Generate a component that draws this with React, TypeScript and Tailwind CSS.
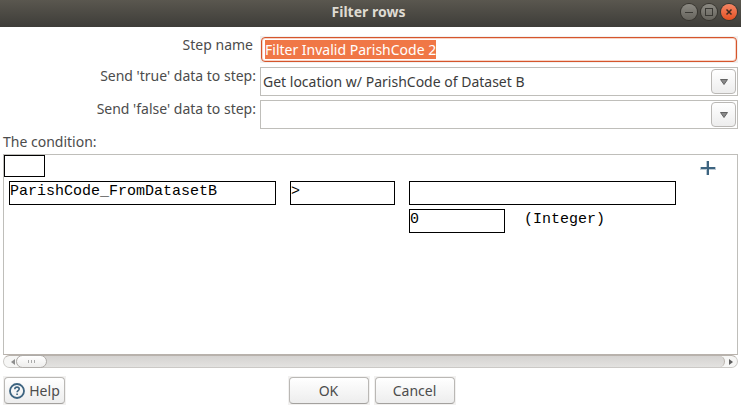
import { useEffect, useRef } from 'react';
import type { ReactNode } from 'react';

function WindowButton({ label, close, children }: { label: string; close?: boolean; children: ReactNode }) {
  return (
    <button
      type="button"
      aria-label={label}
      className={
        close
          ? 'size-4 rounded-full bg-linear-to-b from-[#f58563] to-[#e3501f] text-[#3c2a20] ring-1 ring-[#37352f]'
          : 'size-4 rounded-full bg-linear-to-b from-[#8c8a83] to-[#66645d] text-[#3a3934] ring-1 ring-[#37352f]'
      }
    >
      <svg viewBox="0 0 16 16" className="size-4" fill="none" stroke="currentColor" shapeRendering="crispEdges">
        {children}
      </svg>
    </button>
  );
}

function TitleBar() {
  return (
    <header className="grid h-[27px] grid-cols-[1fr_auto_1fr] items-center bg-linear-to-b from-[#5a574f] to-[#3e3d39] pr-1 pb-[3px]">
      <span />
      <h1 className="text-sm leading-5 font-bold text-[#dfdbd2]">Filter rows</h1>
      <div className="flex justify-end gap-1">
        <WindowButton label="Minimize">
          <path d="M4 8.5h8" />
        </WindowButton>
        <WindowButton label="Maximize">
          <path d="M4.500 4.500h7v7h-7z" />
        </WindowButton>
        <WindowButton label="Close" close>
          <path d="M5.500 5.500l5 5M10.500 5.500l-5 5" strokeWidth="1.500" shapeRendering="auto" />
        </WindowButton>
      </div>
    </header>
  );
}

function StepSelect({ id, value }: { id: string; value: string }) {
  return (
    <div className="relative">
      <select
        id={id}
        defaultValue={value}
        className="block h-[29px] w-full appearance-none border border-[#bfbeba] bg-white pr-8 pl-[2px] text-[#3c3c3c] outline-none"
      >
        <option>{value}</option>
      </select>
      <span className="pointer-events-none absolute top-[2px] right-[2px] flex h-[25px] w-[25px] items-center justify-center rounded border border-[#bab8b5] bg-linear-to-b from-white to-[#ededed]">
        <svg viewBox="0 0 8 6" className="h-[6px] w-2">
          <path d="M0.500 0.500h7L4 5.500z" fill="#8a8a8a" stroke="#626262" strokeWidth="1" />
        </svg>
      </span>
    </div>
  );
}

function Cell({ label, className, children }: { label: string; className: string; children?: ReactNode }) {
  return (
    <button type="button" aria-label={label} className={`flex items-start border border-black bg-white text-left ${className}`}>
      {children}
    </button>
  );
}

function Condition() {
  return (
    <div className="h-[201px] border border-[#bfbeba] border-b-[#b8b2ac] font-['Liberation_Mono',monospace] text-[15px] leading-5 text-black">
      <div className="flex items-start justify-between pr-[21px]">
        <Cell label="Negate" className="h-[22px] w-[41px]" />
        <button type="button" aria-label="Add condition" className="mt-[5px]">
          <svg viewBox="0 0 16 16" className="size-4" fill="#3d6480">
            <path d="M0 7h16v3H0zM6 1h3v14H6z" opacity="0.35" />
            <path d="M1 7h14v2H1zM7 1h2v14H7z" />
          </svg>
        </button>
      </div>
      <div className="mt-1 ml-[5px] grid grid-cols-[267px_105px_267px] gap-x-[14px] gap-y-1">
        <Cell label="Field" className="h-6">ParishCode_FromDatasetB</Cell>
        <Cell label="Operator" className="h-6">&gt;</Cell>
        <Cell label="Compared field" className="h-6" />
        <div className="col-start-3 flex gap-[19px]">
          <Cell label="Value" className="h-6 w-24">0</Cell>
          <span className="pt-px">(Integer)</span>
        </div>
      </div>
    </div>
  );
}

function HorizontalScrollbar() {
  return (
    <div className="flex h-[13px] items-stretch rounded-full border border-[#cbc9c6] border-t-[#b8b2ac] bg-[#f6f6f5]">
      <button type="button" aria-label="Scroll left" className="flex w-3 items-center justify-end pr-px">
        <svg viewBox="0 0 4 6" className="h-[6px] w-1">
          <path d="M4 0v6L0 3z" fill="#8e8e8e" />
        </svg>
      </button>
      <div className="flex flex-1 rounded-full border-r border-[#b8b2ac] bg-linear-to-b from-[#d5d3d1] to-[#e3e2e0]">
        <div className="-my-px flex w-[31px] items-center justify-center gap-[2px] rounded-full border border-[#aeaba8] bg-linear-to-b from-white to-[#eeedec]">
          <i className="h-[3px] w-px bg-[#aaa]" />
          <i className="h-[3px] w-px bg-[#aaa]" />
          <i className="h-[3px] w-px bg-[#aaa]" />
        </div>
      </div>
      <button type="button" aria-label="Scroll right" className="flex w-3 items-center justify-center">
        <svg viewBox="0 0 4 6" className="h-[6px] w-1">
          <path d="M0 0v6L4 3z" fill="#5e5e5e" />
        </svg>
      </button>
    </div>
  );
}

function PushButton({ className, children }: { className: string; children: ReactNode }) {
  return (
    <div className="bg-[#f2f1f0] p-px">
      <button
        type="button"
        className={`flex h-[27px] items-center justify-center rounded border border-[#bab8b5] border-b-[#a3a19e] bg-linear-to-b from-white to-[#ededed] ${className}`}
      >
        {children}
      </button>
    </div>
  );
}

export default function App() {
  const nameRef = useRef<HTMLInputElement>(null);

  useEffect(() => {
    nameRef.current?.focus();
    nameRef.current?.select();
  }, []);

  return (
    <main className="min-h-screen bg-white font-['Noto_Sans',sans-serif] text-sm leading-[18px] text-[#4c4c4c]">
      <TitleBar />
      <form className="px-[3px]" onSubmit={(e) => e.preventDefault()}>
        <div className="grid grid-cols-[257px_1fr] pt-[9px]">
          <label htmlFor="step-name" className="pr-[7px] text-right">Step name</label>
          <div className="mb-1 bg-[#f2f1f0] p-px">
            <input
              id="step-name"
              ref={nameRef}
              type="text"
              defaultValue="Filter Invalid ParishCode 2"
              className="block h-[25px] w-full rounded border border-[#d5552c] bg-white px-[3px] text-[#3c3c3c] ring-1 ring-[#f9d3c5] outline-none ring-inset selection:bg-[#f07746] selection:text-white"
            />
          </div>
          <label htmlFor="true-step" className="pr-1 text-right">Send 'true' data to step:</label>
          <div className="mb-1">
            <StepSelect id="true-step" value="Get location w/ ParishCode of Dataset B" />
          </div>
          <label htmlFor="false-step" className="pr-1 text-right">Send 'false' data to step:</label>
          <StepSelect id="false-step" value="" />
        </div>
        <p className="mt-1 mb-[3px]">The condition:</p>
        <Condition />
        <HorizontalScrollbar />
        <div className="mt-2 grid grid-cols-[1fr_auto_1fr] items-start">
          <div className="flex">
            <PushButton className="w-[61px] gap-1">
              <svg viewBox="0 0 16 16" className="size-4" fill="none" stroke="#3d6480">
                <circle cx="8" cy="8" r="7" strokeWidth="1.800" />
                <path d="M5.800 6.300c0-1.500 1-2.200 2.200-2.200s2.200.8 2.200 2c0 1.500-2.100 1.500-2.100 3.200M8.100 10.400v1.500" strokeWidth="1.600" />
              </svg>
              Help
            </PushButton>
          </div>
          <div className="flex gap-1 pl-[2px]">
            <PushButton className="w-20">OK</PushButton>
            <PushButton className="w-20">Cancel</PushButton>
          </div>
        </div>
      </form>
    </main>
  );
}
